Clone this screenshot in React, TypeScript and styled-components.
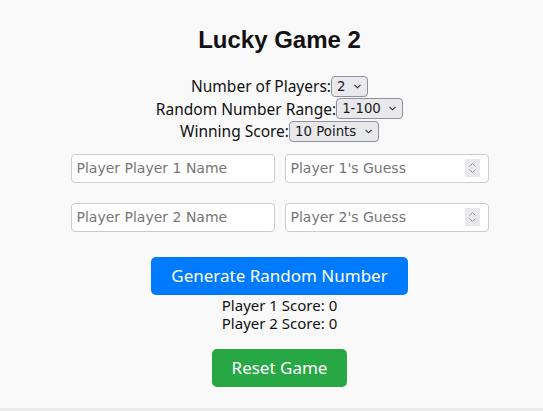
import React, { useState } from "react";
import styled, { createGlobalStyle } from "styled-components";

const GlobalStyle = createGlobalStyle`
  html, body {
    margin: 0;
    padding: 0;
    background: #ebebeb;
  }
  body {
    font-family: "Noto Sans", "DejaVu Sans", sans-serif;
  }
`;

const Page = styled.div`
  background: #f9f9f9;
  padding: 26px 0 21px 16px;
  text-align: center;
  color: #111;
`;

const Title = styled.h1`
  font-family: "Liberation Sans", Arial, sans-serif;
  font-size: 24px;
  font-weight: 700;
  margin: 0 0 21px;
  line-height: 28px;
`;

const SettingRow = styled.div`
  display: flex;
  justify-content: center;
  align-items: center;
  height: 22.5px;
  font-size: 15.5px;
`;

const SelectWrap = styled.span`
  position: relative;
  display: inline-flex;
`;

const Select = styled.select`
  appearance: none;
  -webkit-appearance: none;
  box-sizing: border-box;
  height: 21px;
  padding: 0 21px 0 5px;
  margin: 0;
  font-family: "DejaVu Sans", sans-serif;
  font-size: 13.33px;
  color: #1a1a1a;
  background: #e9e9ed;
  border: 1px solid #8f8f9d;
  border-radius: 4px;
`;

const Chevron = styled.svg`
  position: absolute;
  right: 7px;
  top: 8px;
  pointer-events: none;
`;

const PlayerGrid = styled.div`
  display: flex;
  flex-direction: column;
  align-items: center;
  gap: 20px;
  margin-top: 11px;
`;

const PlayerRow = styled.div`
  display: flex;
  gap: 10px;
`;

const FieldWrap = styled.div`
  position: relative;
  display: flex;
`;

const Field = styled.input`
  box-sizing: border-box;
  width: 204px;
  height: 29px;
  padding: 0 5px;
  border: 1px solid #ccc;
  border-radius: 4px;
  background: #fff;
  font-family: "DejaVu Sans", sans-serif;
  font-size: 14px;
  color: #333;
  -moz-appearance: textfield;
  &::placeholder {
    color: #767676;
  }
  &::-webkit-inner-spin-button,
  &::-webkit-outer-spin-button {
    -webkit-appearance: none;
    margin: 0;
  }
`;

const Spinner = styled.div`
  position: absolute;
  right: 9px;
  top: 5px;
  width: 15px;
  height: 18px;
  background: #e9e9ed;
  display: flex;
  align-items: center;
  justify-content: center;
  pointer-events: none;
`;

const Button = styled.button<{ $tone: "blue" | "green" }>`
  font-family: "Noto Sans", sans-serif;
  font-size: 17px;
  color: #fff;
  background: ${(p) => (p.$tone === "blue" ? "#007bff" : "#28a745")};
  border: none;
  border-radius: 5px;
  padding: 0 20px;
  height: 38px;
  cursor: pointer;
`;

const Actions = styled.div`
  display: flex;
  flex-direction: column;
  align-items: center;
  margin-top: 25px;
`;

const Scores = styled.div`
  font-size: 15px;
  line-height: 18px;
  margin: 1px 0 17px;
`;

function Dropdown(props: {
  value: string;
  onChange: (v: string) => void;
  options: [string, string][];
}) {
  return (
    <SelectWrap>
      <Select value={props.value} onChange={(e) => props.onChange(e.target.value)}>
        {props.options.map(([v, label]) => (
          <option key={v} value={v}>
            {label}
          </option>
        ))}
      </Select>
      <Chevron width="7" height="5" viewBox="0 0 7 5">
        <path d="M0.5 0.8 L3.5 3.8 L6.5 0.8" fill="none" stroke="#2b2b2b" strokeWidth="1.1" />
      </Chevron>
    </SelectWrap>
  );
}

export default function App() {
  const [players, setPlayers] = useState("2");
  const [range, setRange] = useState("100");
  const [target, setTarget] = useState("10");
  const count = Number(players);
  const list = Array.from({ length: count }, (_, i) => i + 1);

  return (
    <>
      <GlobalStyle />
      <Page>
        <Title>Lucky Game 2</Title>
        <SettingRow>
          Number of Players:
          <Dropdown
            value={players}
            onChange={setPlayers}
            options={[["2", "2"], ["3", "3"], ["4", "4"]]}
          />
        </SettingRow>
        <SettingRow>
          Random Number Range:
          <Dropdown
            value={range}
            onChange={setRange}
            options={[["10", "1-10"], ["50", "1-50"], ["100", "1-100"]]}
          />
        </SettingRow>
        <SettingRow>
          Winning Score:
          <Dropdown
            value={target}
            onChange={setTarget}
            options={[["5", "5 Points"], ["10", "10 Points"], ["20", "20 Points"]]}
          />
        </SettingRow>
        <PlayerGrid>
          {list.map((n) => (
            <PlayerRow key={n}>
              <Field type="text" placeholder={`Player Player ${n} Name`} />
              <FieldWrap>
                <Field type="number" placeholder={`Player ${n}'s Guess`} />
                <Spinner>
                  <svg width="9" height="12" viewBox="0 0 9 12">
                    <path
                      d="M1.5 4.5 L4.5 1.5 L7.5 4.5 M1.5 7.5 L4.5 10.5 L7.5 7.5"
                      fill="none"
                      stroke="#9a9aa2"
                      strokeWidth="1"
                    />
                  </svg>
                </Spinner>
              </FieldWrap>
            </PlayerRow>
          ))}
        </PlayerGrid>
        <Actions>
          <Button $tone="blue">Generate Random Number</Button>
          <Scores>
            {list.map((n) => (
              <div key={n}>Player {n} Score: 0</div>
            ))}
          </Scores>
          <Button $tone="green">Reset Game</Button>
        </Actions>
      </Page>
    </>
  );
}
